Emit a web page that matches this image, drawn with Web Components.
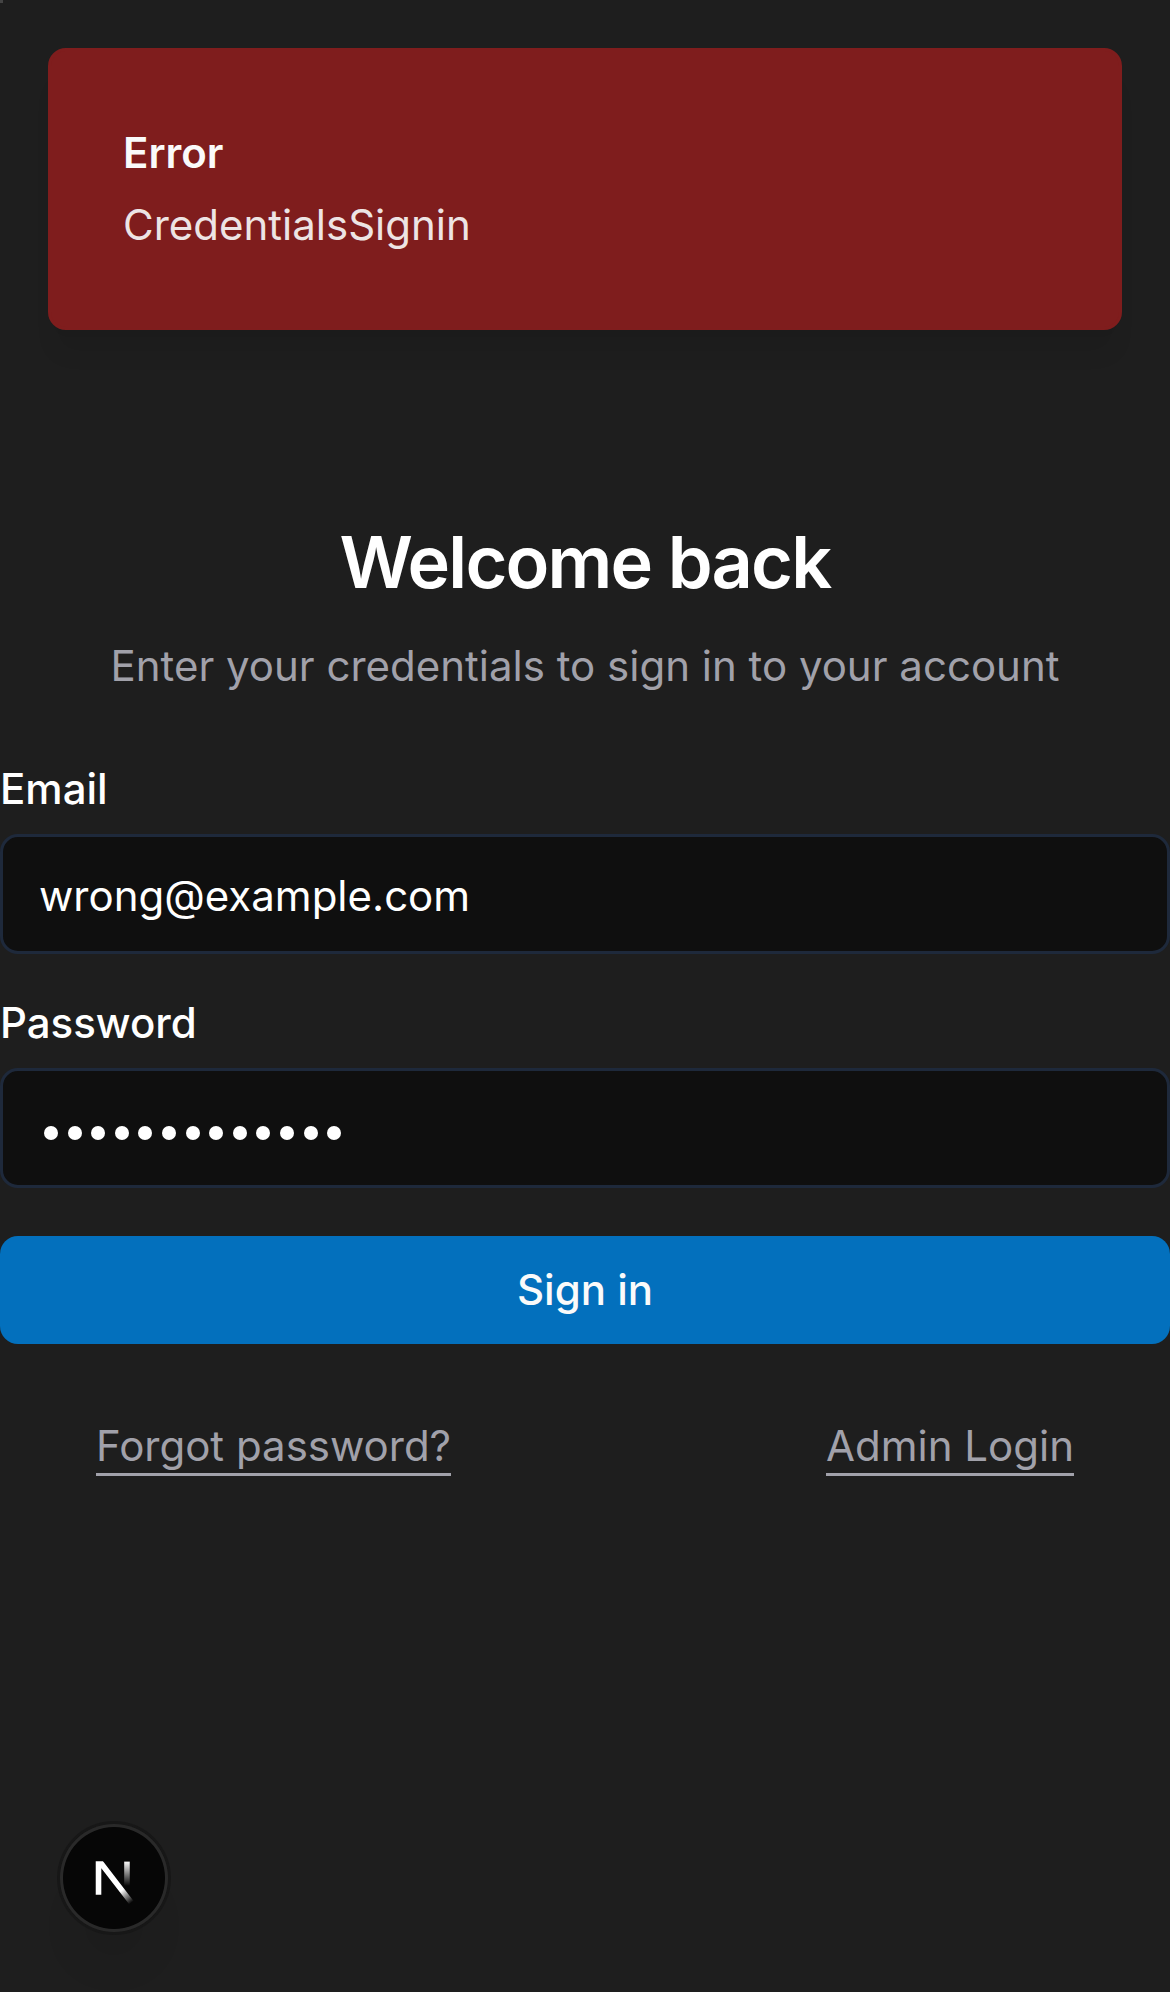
<!DOCTYPE html>
<html lang="en">
<head>
<meta charset="utf-8">
<title>Sign in</title>
<style>
  html, body { margin: 0; background: #1e1e1e; }
  body { font-family: Inter, "Liberation Sans", sans-serif; font-size: 42px; line-height: 60px; color: #fff; -webkit-font-smoothing: antialiased; }
</style>
</head>
<body>
<sign-in-page></sign-in-page>
<script>
const define = (name, html) => {
  const template = document.createElement('template');
  template.innerHTML = html;
  customElements.define(name, class extends HTMLElement {
    constructor() {
      super();
      this.attachShadow({ mode: 'open' }).append(template.content.cloneNode(true));
    }
  });
};

define('toast-message', `
  <style>
    :host { display: flex; flex-direction: column; gap: 12px; box-sizing: border-box; padding: 72px;
      border: 3px solid #7f1d1d; border-radius: 18px; background: #7f1d1d; color: #fafafa;
      box-shadow: 0 30px 24px -9px rgba(0,0,0,.07), 0 12px 10px -12px rgba(0,0,0,.07); }
    .title { font-weight: 600; }
    .text { opacity: .9; }
  </style>
  <div class="title"><slot name="title"></slot></div>
  <div class="text"><slot></slot></div>`);

define('page-heading', `
  <style>
    :host { display: flex; flex-direction: column; gap: 26px; text-align: center; }
    h1 { margin: 0; font-size: 72px; line-height: 96px; font-weight: 600; letter-spacing: -1.8px; }
    p { margin: 0; color: #a1a1aa; }
  </style>
  <h1><slot name="title"></slot></h1>
  <p><slot></slot></p>`);

define('form-field', `
  <style>
    :host { display: flex; flex-direction: column; gap: 24px; }
    .label { line-height: 42px; font-weight: 500; }
    .box { display: flex; align-items: center; box-sizing: border-box; height: 120px; padding: 4px 36px 0;
      border: 3px solid #1e293b; border-radius: 18px; background: #0f0f0f; }
  </style>
  <div class="label"><slot name="label"></slot></div>
  <div class="box"><slot></slot></div>`);

define('password-dots', `
  <style>
    :host { display: flex; gap: 9.6px; padding: 5px 0 0 5px; }
    i { width: 14px; height: 14px; border-radius: 50%; background: #fff; }
  </style>
  ${'<i></i>'.repeat(13)}`);

define('primary-button', `
  <style>
    :host { display: block; }
    button { display: flex; align-items: center; justify-content: center; width: 100%; height: 108px; padding: 0;
      border: 0; border-radius: 18px; background: #0370bd; color: #fafafa; font: inherit; font-weight: 500; }
  </style>
  <button type="button"><slot></slot></button>`);

define('text-link', `
  <style>
    :host { display: block; line-height: 54px; color: #a1a1aa; border-bottom: 3px solid #a1a1aa; }
  </style>
  <slot></slot>`);

define('dev-badge', `
  <style>
    :host { display: block; width: 108px; height: 108px; border-radius: 50%; background: rgba(0,0,0,.8);
      box-shadow: 0 0 0 3px #171717, inset 0 0 0 3px rgba(255,255,255,.14), 0 48px 48px -24px rgba(0,0,0,.1); }
    svg { display: block; }
  </style>
  <svg width="108" height="108" viewBox="0 0 36 36" fill="none">
    <defs>
      <linearGradient id="a" x1="9.955" y1="11.157" x2="15.494" y2="17.95" gradientUnits="userSpaceOnUse">
        <stop stop-color="#fff"/><stop offset=".604" stop-color="#fff" stop-opacity="0"/><stop offset="1" stop-color="#fff" stop-opacity="0"/>
      </linearGradient>
      <linearGradient id="b" x1="11.822" y1="1.4" x2="11.791" y2="9.625" gradientUnits="userSpaceOnUse">
        <stop stop-color="#fff"/><stop offset="1" stop-color="#fff" stop-opacity="0"/>
      </linearGradient>
      <clipPath id="c"><rect x="0" y="1.4" width="18" height="16"/></clipPath>
    </defs>
    <g transform="translate(10.5 11)" clip-path="url(#c)">
      <path d="M13.3 15.2 2.34 1V12.6" stroke="url(#a)" stroke-width="1.86"/>
      <path d="M11.825 1.5V13.1" stroke="url(#b)" stroke-width="1.86"/>
    </g>
  </svg>`);

define('sign-in-page', `
  <style>
    :host { display: block; position: relative; height: 1992px; overflow: hidden; }
    .corner { position: absolute; left: 0; top: 0; width: 3px; height: 3px; background: #444; }
    toast-message { position: absolute; left: 48px; right: 48px; top: 48px; }
    main { display: flex; flex-direction: column; padding-top: 514px; }
    form { display: flex; flex-direction: column; gap: 48px; margin-top: 72px; }
    nav { display: flex; justify-content: space-between; margin: 75px 96px 0; }
    dev-badge { position: absolute; left: 60px; top: 1824px; }
  </style>
  <div class="corner"></div>
  <toast-message><span slot="title">Error</span>CredentialsSignin</toast-message>
  <main>
    <page-heading><span slot="title">Welcome back</span>Enter your credentials to sign in to your account</page-heading>
    <form>
      <form-field><span slot="label">Email</span>wrong@example.com</form-field>
      <form-field><span slot="label">Password</span><password-dots></password-dots></form-field>
      <primary-button>Sign in</primary-button>
    </form>
    <nav><text-link>Forgot password?</text-link><text-link>Admin Login</text-link></nav>
  </main>
  <dev-badge></dev-badge>`);
</script>
</body>
</html>
